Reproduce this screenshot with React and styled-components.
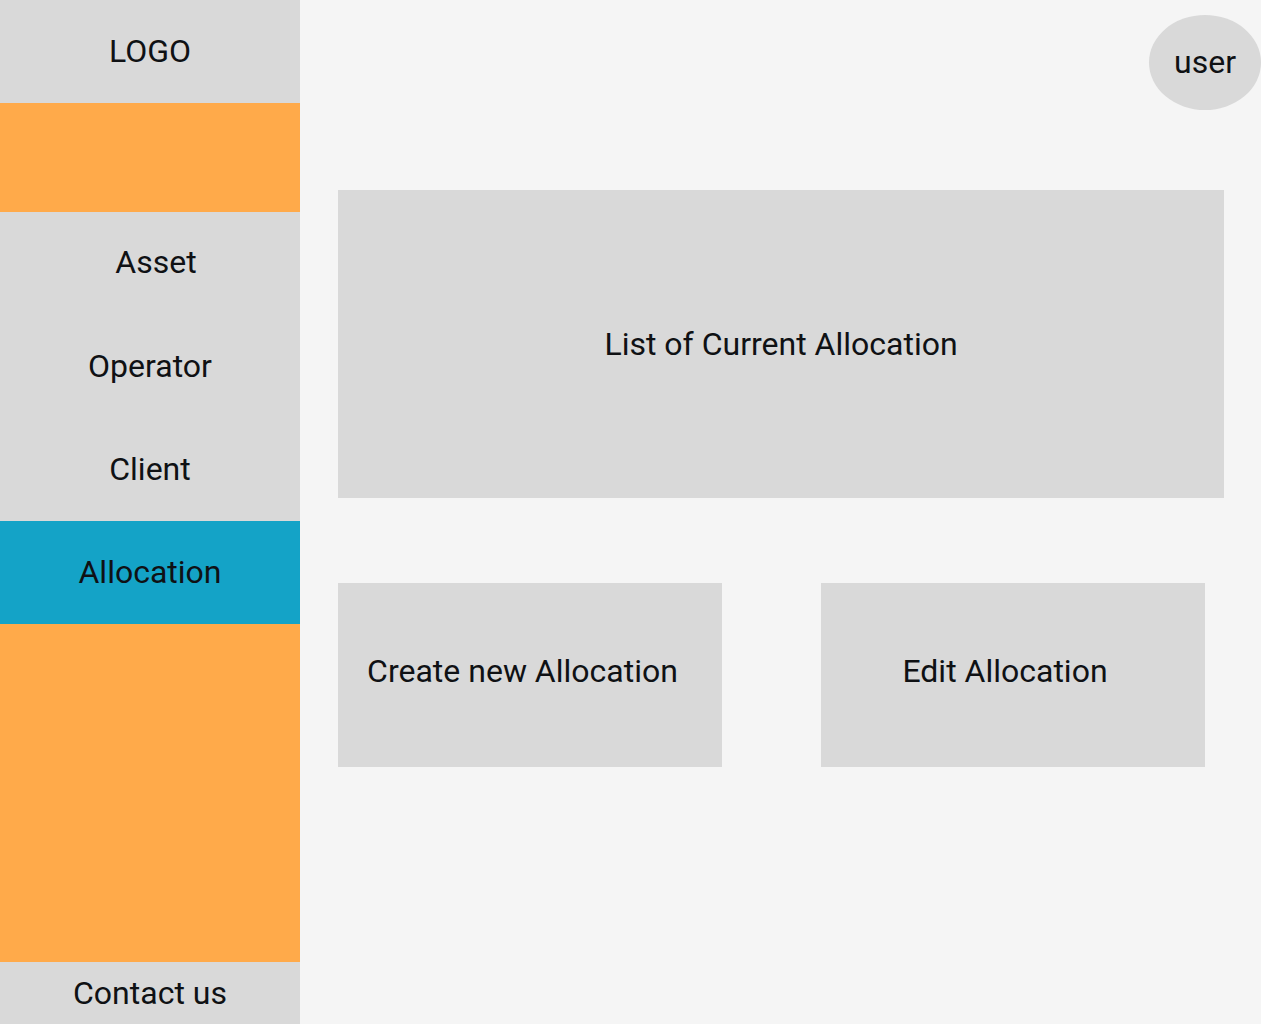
import React from "react";
import styled, { createGlobalStyle } from "styled-components";

const Global = createGlobalStyle`
  html, body { margin: 0; padding: 0; }
  body { font-family: Roboto, "Liberation Sans", sans-serif; background: #f5f5f5; color: #0f1114; }
  * { box-sizing: border-box; }
`;

const Page = styled.div`
  display: flex;
  width: 1261px;
  height: 1024px;
  background: #f5f5f5;
`;

const Sidebar = styled.nav`
  display: flex;
  flex-direction: column;
  width: 300px;
  flex-shrink: 0;
  height: 100%;
`;

const SideItem = styled.div`
  display: flex;
  align-items: center;
  justify-content: center;
  height: ${(p) => p.$h || 103}px;
  padding-left: ${(p) => p.$shift || 0}px;
  padding-bottom: ${(p) => p.$lift ?? 2}px;
  background: ${(p) => (p.$active ? "#14a3c7" : "#d9d9d9")};
  font-size: 32px;
  color: #0f1114;
`;

const Filler = styled.div`
  background: #ffaa4a;
  height: ${(p) => (p.$h ? `${p.$h}px` : "auto")};
  flex: ${(p) => (p.$grow ? 1 : "none")};
`;

const Main = styled.main`
  flex: 1;
  display: flex;
  flex-direction: column;
`;

const Header = styled.header`
  height: 190px;
  display: flex;
  justify-content: flex-end;
  align-items: flex-start;
  padding-top: 15px;
`;

const User = styled.div`
  width: 112px;
  height: 95px;
  border-radius: 50%;
  background: #d9d9d9;
  display: flex;
  align-items: center;
  justify-content: center;
  padding-bottom: 2px;
  font-size: 32px;
`;

const Content = styled.section`
  padding: 0 37px 0 38px;
  display: flex;
  flex-direction: column;
  gap: 85px;
`;

const Panel = styled.div`
  height: ${(p) => p.$h}px;
  width: ${(p) => (p.$w ? `${p.$w}px` : "auto")};
  background: #d9d9d9;
  display: flex;
  align-items: center;
  justify-content: center;
  padding-right: ${(p) => p.$offset || 0}px;
  padding-bottom: ${(p) => p.$lift || 0}px;
  font-size: 32px;
`;

const Actions = styled.div`
  display: flex;
  gap: 99px;
`;

export default function App() {
  return (
    <>
      <Global />
      <Page>
        <Sidebar>
          <SideItem>LOGO</SideItem>
          <Filler $h={109} />
          <SideItem $shift={12} $lift={4}>Asset</SideItem>
          <SideItem>Operator</SideItem>
          <SideItem>Client</SideItem>
          <SideItem $active>Allocation</SideItem>
          <Filler $grow />
          <SideItem $h={62} $lift={0}>Contact us</SideItem>
        </Sidebar>
        <Main>
          <Header>
            <User>user</User>
          </Header>
          <Content>
            <Panel $h={308}>List of Current Allocation</Panel>
            <Actions>
              <Panel $h={184} $w={384} $offset={15} $lift={8}>Create new Allocation</Panel>
              <Panel $h={184} $w={384} $offset={16} $lift={8}>Edit Allocation</Panel>
            </Actions>
          </Content>
        </Main>
      </Page>
    </>
  );
}
